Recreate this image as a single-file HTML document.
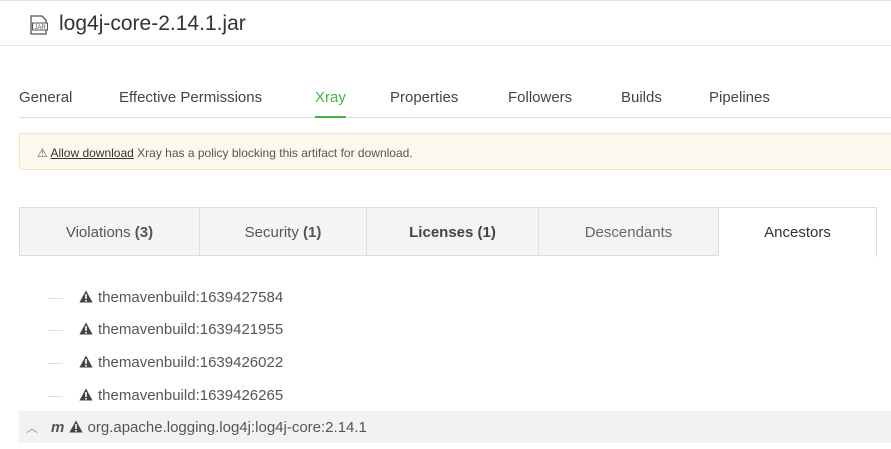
<!DOCTYPE html>
<html><head><style>
body{margin:0;width:891px;height:449px;background:#fff;font-family:"Liberation Sans",sans-serif;color:#555;position:relative;overflow:hidden}
.a{position:absolute;white-space:nowrap}
.nav{top:89px;font-size:15px;color:#444}
.tab{position:absolute;top:207px;height:49px;background:#f4f4f4;border:1px solid #ddd;border-left:none;box-sizing:border-box;font-size:15px;line-height:49px;text-align:center;color:#555}
.row{position:absolute;left:48px;font-size:15px;color:#555;white-space:nowrap}
.dash{display:inline-block;width:15px;height:1px;background:#ddd;vertical-align:middle;margin-right:16px}
.w{display:inline-block;width:14px;height:13px;margin-right:5px;vertical-align:-1px}
</style></head><body>
<svg width="0" height="0" style="position:absolute"><defs><symbol id="wr" viewBox="0 0 14 13"><path d="M7 0.5L13.6 12.5H0.4z" fill="#444"/><rect x="6.2" y="4" width="1.6" height="5" fill="#fff"/><rect x="6.2" y="10" width="1.6" height="1.6" fill="#fff"/></symbol></defs></svg>
<div class="a" style="left:0;top:0;width:891px;height:1px;background:#e5e5e5"></div>
<svg class="a" style="left:29px;top:15px" width="21" height="20" viewBox="0 0 21 20"><path d="M2 1h11l4 4v14H2z" fill="none" stroke="#555" stroke-width="1.3"/><rect x="3.5" y="8" width="15" height="7" fill="#fff" stroke="#555" stroke-width="1"/><text x="11" y="14" font-size="6" text-anchor="middle" fill="#555" font-family="Liberation Sans">JAR</text></svg>
<div class="a" style="left:59px;top:12px;font-size:21px;color:#333">log4j-core-2.14.1.jar</div>
<div class="a" style="left:0;top:45px;width:891px;height:1px;background:#e5e5e5"></div>
<div class="a nav" style="left:19px">General</div>
<div class="a nav" style="left:119px">Effective Permissions</div>
<div class="a nav" style="left:315px;color:#43b53f">Xray</div>
<div class="a nav" style="left:390px">Properties</div>
<div class="a nav" style="left:508px">Followers</div>
<div class="a nav" style="left:621px">Builds</div>
<div class="a nav" style="left:709px">Pipelines</div>
<div class="a" style="left:19px;top:117px;width:872px;height:1px;background:#ddd"></div>
<div class="a" style="left:315px;top:116px;width:31px;height:2px;background:#43b53f"></div>
<div class="a" style="left:19px;top:133px;width:880px;height:37px;background:#fdf8ee;border:1px solid #f5e4bd;border-radius:3px;box-sizing:border-box"></div>
<div class="a" style="left:37px;top:146px;font-size:12px;color:#555">⚠ <span style="text-decoration:underline;color:#333">Allow download</span> Xray has a policy blocking this artifact for download.</div>
<div class="tab" style="left:19px;width:181px;border-left:1px solid #ddd">Violations <b>(3)</b></div>
<div class="tab" style="left:200px;width:167px">Security <b>(1)</b></div>
<div class="tab" style="left:367px;width:172px;color:#444;font-weight:bold">Licenses (1)</div>
<div class="tab" style="left:539px;width:180px;color:#666">Descendants</div>
<div class="tab" style="left:719px;width:158px;background:#fff;border-bottom:none;height:50px;color:#333">Ancestors</div>
<div class="row" style="top:289px"><span class="dash"></span><svg class="w"><use href="#wr"/></svg>themavenbuild:1639427584</div>
<div class="row" style="top:321px"><span class="dash"></span><svg class="w"><use href="#wr"/></svg>themavenbuild:1639421955</div>
<div class="row" style="top:354px"><span class="dash"></span><svg class="w"><use href="#wr"/></svg>themavenbuild:1639426022</div>
<div class="row" style="top:387px"><span class="dash"></span><svg class="w"><use href="#wr"/></svg>themavenbuild:1639426265</div>
<div class="a" style="left:19px;top:411px;width:872px;height:32px;background:#f2f2f2"></div>
<div class="a" style="left:26px;top:419px;font-size:12px;color:#999">︿</div>
<div class="a" style="left:51px;top:419px;font-size:15px;color:#555"><b><i>m</i></b> <svg class="w"><use href="#wr"/></svg>org.apache.logging.log4j:log4j-core:2.14.1</div>
</body></html>
